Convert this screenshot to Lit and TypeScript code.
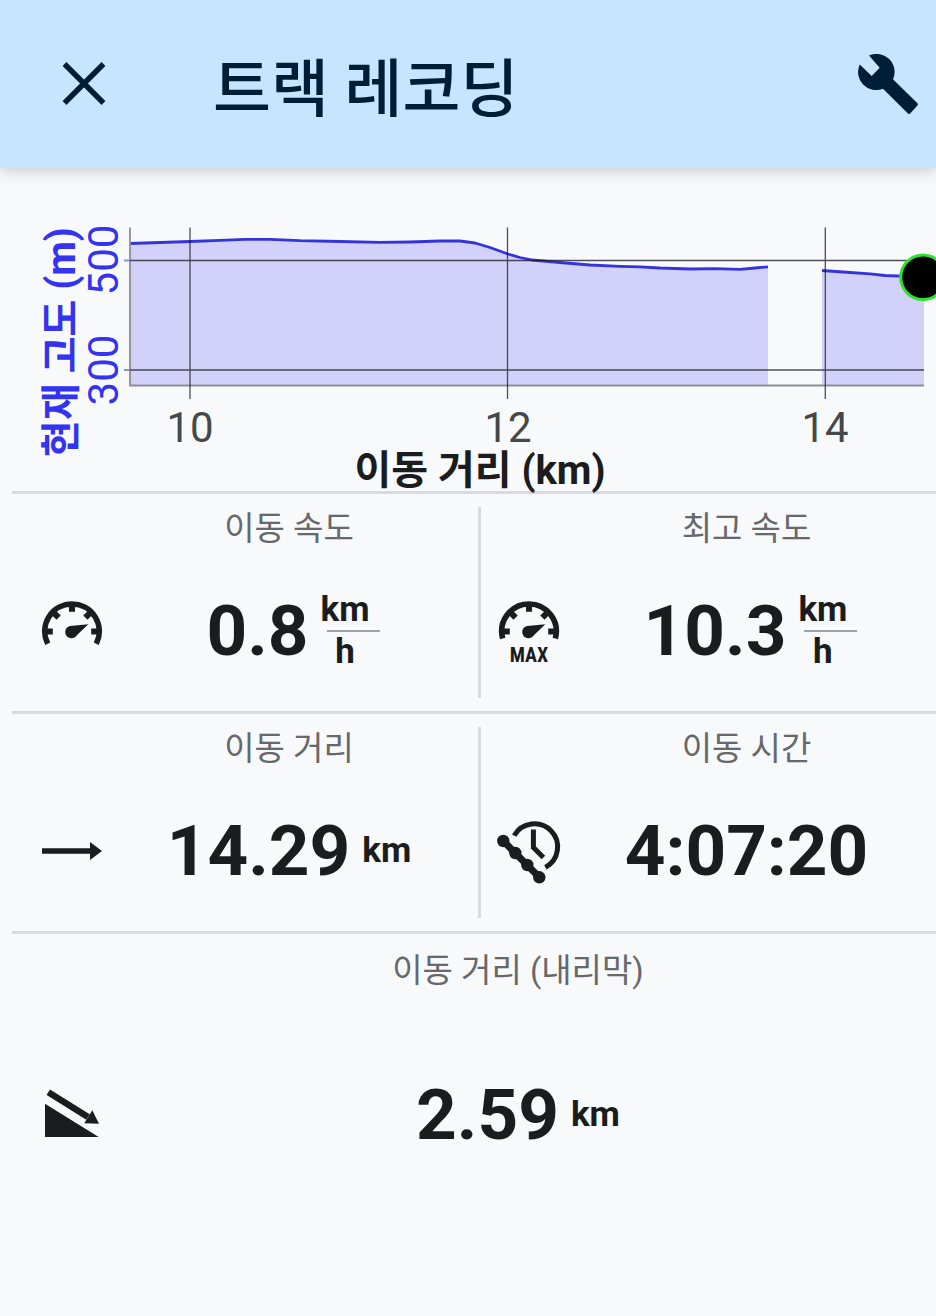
import { LitElement, html, css, svg, nothing } from "lit";
import { customElement, property } from "lit/decorators.js";

const dial = (endX: number, endY: number) => svg`
  <path d="M${36 - endX} ${36 + endY}A27.3 27.3 0 1 1 ${36 + endX} ${36 + endY}" fill="none" stroke="currentColor" stroke-width="5.6"/>
  <path d="M36 10V16.8M10 36.5H16.8M62 36.5H55.2M18 18L22.6 22.6M54 18L49.4 22.6" fill="none" stroke="currentColor" stroke-width="6"/>
  <path d="M52.3 29.2L40.6 40.4A6.2 6.2 0 1 1 34.2 30.9Z" fill="currentColor"/>`;

const icons: Record<string, unknown> = {
  speed: dial(24.3, 12.8),
  maxSpeed: svg`${dial(26.3, 7.6)}
    <text class="max" x="36" y="67" text-anchor="middle">MAX</text>`,
  distance: svg`<path d="M6 33.2H54V27L66 36L54 45V38.8H6Z" fill="currentColor"/>`,
  time: svg`
    <g fill="none" stroke="currentColor" stroke-width="5">
      <path d="M21.2 20.6A23.2 23.2 0 1 1 52.4 52.4"/>
      <path d="M40.4 14.6V32.4L50.4 42.6"/>
      <path d="M10.3 26L46.3 62.3" stroke-width="7"/>
    </g>
    <g fill="currentColor">
      <circle cx="10.3" cy="26" r="6.2"/><circle cx="22.3" cy="38" r="6.2"/>
      <circle cx="34.3" cy="50" r="6.2"/><circle cx="46.3" cy="62.3" r="6.2"/>
    </g>`,
  downhill: svg`
    <path d="M9 24.8V58H62.7Z" fill="currentColor"/>
    <path d="M12.3 13.2L52 38" stroke="currentColor" stroke-width="6.4"/>
    <path d="M63 44.7L56.3 31.3L48.3 44.3Z" fill="currentColor"/>`,
};

@customElement("metric-cell")
class MetricCell extends LitElement {
  @property() label = "";
  @property() value = "";
  @property() unit = "";
  @property() per = "";
  @property() icon = "";

  static styles = css`
    :host {
      display: grid;
      grid-template-columns: 72px minmax(0, 1fr);
      grid-template-rows: auto 1fr;
      color: #1b1c1e;
    }
    .label {
      grid-column: 2;
      margin: 0;
      font-size: 33px;
      line-height: 42px;
      font-weight: 400;
      text-align: center;
      color: #67686b;
    }
    .icon {
      grid-row: 2;
      width: 72px;
      height: 72px;
      align-self: center;
    }
    .max {
      font-family: "Roboto Condensed", Roboto, sans-serif;
      font-size: 20px;
      font-weight: 700;
      fill: currentColor;
    }
    .reading {
      margin: 0;
      display: flex;
      align-items: center;
      justify-content: center;
      gap: 12px;
      font-weight: 700;
    }
    .reading.ratio {
      padding-left: 8px;
    }
    .value {
      font-size: 71px;
      line-height: 84px;
    }
    .unit {
      font-size: 35px;
      line-height: 40px;
    }
    .fraction {
      display: grid;
      font-size: 35px;
      line-height: 40px;
      text-align: center;
    }
    .part {
      padding-right: 10px;
    }
    .bar {
      height: 2px;
      margin-left: 6px;
      background: #a0a1a4;
    }
  `;

  render() {
    return html`
      <h2 class="label">${this.label}</h2>
      <svg class="icon" viewBox="0 0 72 72" aria-hidden="true">${icons[this.icon]}</svg>
      <p class="reading ${this.per ? "ratio" : ""}">
        <span class="value">${this.value}</span>
        ${this.per
          ? html`<span class="fraction"
              ><span class="part">${this.unit}</span><span class="bar"></span
              ><span class="part">${this.per}</span></span
            >`
          : this.unit
            ? html`<span class="unit">${this.unit}</span>`
            : nothing}
      </p>
    `;
  }
}

type Point = [number, number];

const tracks: Point[][] = [
  [
    [130, 75.5], [160, 74.5], [190, 73.5], [220, 72.3], [245, 71.3], [270, 71.3],
    [300, 72.7], [340, 73.5], [380, 74.4], [410, 74], [440, 73], [460, 73],
    [475, 75], [490, 79.5], [508, 86], [520, 89.5], [532, 92], [560, 94.5],
    [590, 97], [620, 98.3], [640, 98.8], [660, 100], [690, 101], [715, 100.7],
    [740, 101.3], [755, 100], [768, 98.8],
  ],
  [[822, 102.5], [850, 104.5], [870, 105.8], [885, 107.5], [924, 109]],
];

const floor = 217.5;
const linePath = (points: Point[]) => "M" + points.map((p) => p.join(" ")).join("L");
const areaPath = (points: Point[]) =>
  `${linePath(points)}V${floor}H${points[0][0]}Z`;

@customElement("elevation-chart")
class ElevationChart extends LitElement {
  static styles = css`
    :host {
      display: block;
    }
    .chart {
      display: block;
      width: 100%;
      overflow: visible;
    }
    .area {
      fill: #d1d1fa;
    }
    .line {
      fill: none;
      stroke: #3434dc;
      stroke-width: 2.8;
      stroke-linejoin: round;
    }
    .grid {
      fill: none;
      stroke: #16161e;
      stroke-opacity: 0.75;
      stroke-width: 1.3;
    }
    .axis {
      fill: none;
      stroke: #8d8e96;
      stroke-width: 1.8;
    }
    .tick {
      stroke: #8c8ce6;
      stroke-width: 2;
    }
    .number {
      font-size: 42px;
      fill: #464749;
      text-anchor: middle;
    }
    .title {
      font-size: 40px;
      font-weight: 700;
      fill: #1b1c1e;
      text-anchor: middle;
    }
    .blue {
      fill: #3333f0;
    }
    .marker {
      fill: #000;
      stroke: #2be52b;
      stroke-width: 3;
    }
  `;

  render() {
    return html`
      <svg class="chart" viewBox="0 0 936 323" role="img" aria-label="현재 고도 (m) / 이동 거리 (km)">
        ${tracks.map((t) => svg`<path class="area" d=${areaPath(t)}/>`)}
        ${tracks.map((t) => svg`<path class="line" d=${linePath(t)}/>`)}
        <path class="axis" d="M130 59.5V217.5H924" />
        <path class="grid" d="M130 92.5H924M130 202H924M190 59.5V231M507.5 59.5V231M825.3 59.5V231" />
        <path class="tick" d="M124 92.5H130M124 202H130" />
        <circle class="marker" cx="923" cy="109.3" r="22.3" />
        <text class="number" x="190" y="274">10</text>
        <text class="number" x="508" y="274">12</text>
        <text class="number" x="825" y="274">14</text>
        <text class="title" x="480" y="316">이동 거리 (km)</text>
        <text class="number blue" transform="translate(118 92) rotate(-90)">500</text>
        <text class="number blue" transform="translate(118 202) rotate(-90)">300</text>
        <text class="title blue" transform="translate(75 174) rotate(-90)">현재 고도 (m)</text>
      </svg>
    `;
  }
}

@customElement("app-root")
class AppRoot extends LitElement {
  static styles = css`
    :host {
      display: block;
      min-height: 100vh;
      overflow-x: hidden;
      background: #f7f9fb;
      font-family: Roboto, "Noto Sans CJK KR", sans-serif;
    }
    .bar {
      display: flex;
      align-items: center;
      box-sizing: border-box;
      height: 168px;
      padding: 0 18px 0 48px;
      color: #001d38;
      background: #c7e5ff;
      box-shadow: 0 4px 14px rgba(0, 0, 0, 0.17);
    }
    .action {
      display: block;
      padding: 0;
      border: 0;
      color: inherit;
      background: none;
    }
    .glyph {
      display: block;
    }
    .heading {
      flex: 1;
      margin: 0 0 0 93px;
      padding-top: 12px;
      font-size: 63px;
      line-height: 80px;
      font-weight: 500;
    }
    .metrics {
      padding-left: 12px;
    }
    .row {
      display: grid;
      grid-template-columns: minmax(0, 466fr) minmax(0, 458fr);
      min-height: 217px;
      border-top: 3px solid #d8dadd;
    }
    .cell {
      padding: 14px 8px 0 24px;
    }
    .cell + .cell {
      position: relative;
      padding: 14px 8px 0 15px;
    }
    .cell + .cell::before {
      content: "";
      position: absolute;
      left: 0;
      top: 13px;
      bottom: 13px;
      width: 3px;
      background: #d8dadd;
    }
    .row.wide {
      grid-template-columns: minmax(0, 1fr);
      min-height: 304px;
    }
    .wide .cell {
      padding: 16px 8px 0 24px;
    }
  `;

  render() {
    return html`
      <header class="bar">
        <button class="action" aria-label="닫기">
          <svg class="glyph" width="72" height="72" viewBox="0 0 72 72" aria-hidden="true">
            <path d="M16.5 16L55.5 55M55.5 16L16.5 55" stroke="currentColor" stroke-width="5.4" />
          </svg>
        </button>
        <h1 class="heading">트랙 레코딩</h1>
        <button class="action" aria-label="설정">
          <svg class="glyph" width="60" height="60" viewBox="0 0 60 60" aria-hidden="true">
            <path
              fill="currentColor"
              d="M11 1.6A18 18 0 0 1 35 25.3L59.4 49.2Q60.4 50.3 59.4 51.4L52.2 59.5Q51 60.6 49.9 59.5L25 34.7A18 18 0 0 1 1.8 10.4L13.7 22L21.7 13.7Z"
            />
          </svg>
        </button>
      </header>
      <main>
        <elevation-chart></elevation-chart>
        <div class="metrics">
          <div class="row">
            <metric-cell class="cell" icon="speed" label="이동 속도" value="0.8" unit="km" per="h"></metric-cell>
            <metric-cell class="cell" icon="maxSpeed" label="최고 속도" value="10.3" unit="km" per="h"></metric-cell>
          </div>
          <div class="row">
            <metric-cell class="cell" icon="distance" label="이동 거리" value="14.29" unit="km"></metric-cell>
            <metric-cell class="cell" icon="time" label="이동 시간" value="4:07:20"></metric-cell>
          </div>
          <div class="row wide">
            <metric-cell class="cell" icon="downhill" label="이동 거리 (내리막)" value="2.59" unit="km"></metric-cell>
          </div>
        </div>
      </main>
    `;
  }
}
